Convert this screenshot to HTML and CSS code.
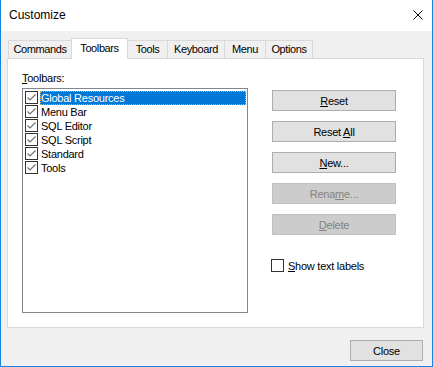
FILE: index.html
```html
<!DOCTYPE html>
<html lang="en">
<head>
  <meta charset="UTF-8">
  <meta name="viewport" content="width=device-width, initial-scale=1.0">
  <title>Customize</title>
  <link rel="stylesheet" href="styles.css">
</head>
<body>
  <div class="window">
    <div class="titlebar">
      <span class="title">Customize</span>
      <svg class="close-x" viewBox="0 0 10 10" width="10" height="10">
        <path d="M0.5 0.5L9.5 9.5M9.5 0.5L0.5 9.5" stroke="#000" stroke-width="1" fill="none"/>
      </svg>
    </div>

    <div class="content">
      <div class="tabs">
        <div class="tab tab-commands">Commands</div>
        <div class="tab tab-toolbars active">Toolbars</div>
        <div class="tab tab-tools">Tools</div>
        <div class="tab tab-keyboard">Keyboard</div>
        <div class="tab tab-menu">Menu</div>
        <div class="tab tab-options">Options</div>
      </div>

      <div class="panel">
        <div class="left-col">
          <div class="field-label"><u>T</u>oolbars:</div>
          <ul class="list">
            <li class="item selected">
              <span class="check"></span>
              <span class="item-text">Global Resources</span>
            </li>
            <li class="item">
              <span class="check"></span>
              <span class="item-text">Menu Bar</span>
            </li>
            <li class="item">
              <span class="check"></span>
              <span class="item-text">SQL Editor</span>
            </li>
            <li class="item">
              <span class="check"></span>
              <span class="item-text">SQL Script</span>
            </li>
            <li class="item">
              <span class="check"></span>
              <span class="item-text">Standard</span>
            </li>
            <li class="item">
              <span class="check"></span>
              <span class="item-text">Tools</span>
            </li>
          </ul>
        </div>

        <div class="right-col">
          <button class="btn"><u>R</u>eset</button>
          <button class="btn">Reset <u>A</u>ll</button>
          <button class="btn"><u>N</u>ew...</button>
          <button class="btn" disabled>Rena<u>m</u>e...</button>
          <button class="btn" disabled><u>D</u>elete</button>

          <label class="option">
            <span class="box"></span>
            <span class="option-text"><u>S</u>how text labels</span>
          </label>
        </div>
      </div>

      <div class="footer">
        <button class="btn btn-close">Close</button>
      </div>
    </div>
  </div>
</body>
</html>
```

FILE: styles.css
```css
* {
  margin: 0;
  padding: 0;
  box-sizing: border-box;
}

body {
  font-family: 'Liberation Sans', Arial, sans-serif;
  font-size: 11px;
  letter-spacing: -0.25px;
  color: #000;
  background: #fff;
}

u {
  text-decoration: underline;
  text-underline-offset: 1px;
}

.window {
  width: 433px;
  height: 367px;
  border: 1px solid #1883d7;
  border-top: none;
  background: #f0f0f0;
  display: flex;
  flex-direction: column;
}

.titlebar {
  height: 31px;
  background: #fff;
  display: flex;
  align-items: center;
  justify-content: space-between;
  padding: 0 9px 1px 8px;
}

.title {
  font-size: 12px;
  line-height: 14px;
  letter-spacing: 0;
}

.close-x {
  display: block;
}

.content {
  padding: 7px 8px 0 6px;
}

/* tab strip */

.tabs {
  display: flex;
  align-items: flex-end;
  padding-left: 1px;
  height: 20px;
}

.tab {
  height: 18px;
  line-height: 17px;
  border: 1px solid #d9d9d9;
  border-bottom: none;
  background: #f0f0f0;
  margin-left: -1px;
  text-align: center;
  letter-spacing: -0.4px;
  white-space: nowrap;
}

.tab-commands { width: 64px; margin-left: 0; }
.tab-toolbars { width: 57px; }
.tab-tools { width: 41px; }
.tab-keyboard { width: 58px; }
.tab-menu { width: 42px; }
.tab-options { width: 48px; }

.tab.active {
  height: 21px;
  line-height: 14px;
  padding-top: 2px;
  margin-bottom: -1px;
  background: #fff;
  position: relative;
  z-index: 1;
}

/* page body */

.panel {
  height: 270px;
  background: #fff;
  border: 1px solid #d9d9d9;
  display: flex;
  padding: 12px 0 0 14px;
  gap: 24px;
}

.left-col {
  width: 226px;
}

.field-label {
  line-height: 14px;
  margin-bottom: 3px;
}

.list {
  list-style: none;
  height: 225px;
  border: 1px solid #828790;
  padding: 2px 1px 0 2px;
}

.item {
  display: flex;
  height: 14px;
  line-height: 14px;
}

.check {
  width: 13px;
  height: 13px;
  margin-right: 2px;
  border: 1px solid #333;
  background: #fff url("data:image/svg+xml,%3Csvg xmlns='http://www.w3.org/2000/svg' width='11' height='11'%3E%3Cpath d='M1.5 5.5L4 8L9.5 2.5' stroke='%23707070' stroke-width='1.2' fill='none'/%3E%3C/svg%3E") no-repeat center;
}

.item-text {
  flex: 1;
  padding-left: 1px;
  white-space: nowrap;
}

.item.selected .item-text {
  background: #0078d7;
  color: #fff;
  outline: 1px dotted #f5a340;
  outline-offset: -1px;
}

.right-col {
  width: 124px;
  padding-top: 19px;
  display: flex;
  flex-direction: column;
  gap: 10px;
}

.btn {
  width: 124px;
  height: 21px;
  font-family: inherit;
  font-size: 11px;
  letter-spacing: -0.25px;
  color: #000;
  background: #e1e1e1;
  border: 1px solid #adadad;
}

.btn:disabled {
  background: #cccccc;
  border-color: #bfbfbf;
  color: #838383;
}

.option {
  display: flex;
  align-items: center;
  margin-top: 13px;
  margin-left: -1px;
}

.box {
  width: 13px;
  height: 13px;
  border: 1px solid #333;
  background: #fff;
  margin-right: 4px;
}

.option-text {
  line-height: 14px;
  padding-top: 1px;
}

.footer {
  display: flex;
  justify-content: flex-end;
  padding-top: 12px;
  padding-right: 1px;
}

.btn-close {
  width: 73px;
}
```
